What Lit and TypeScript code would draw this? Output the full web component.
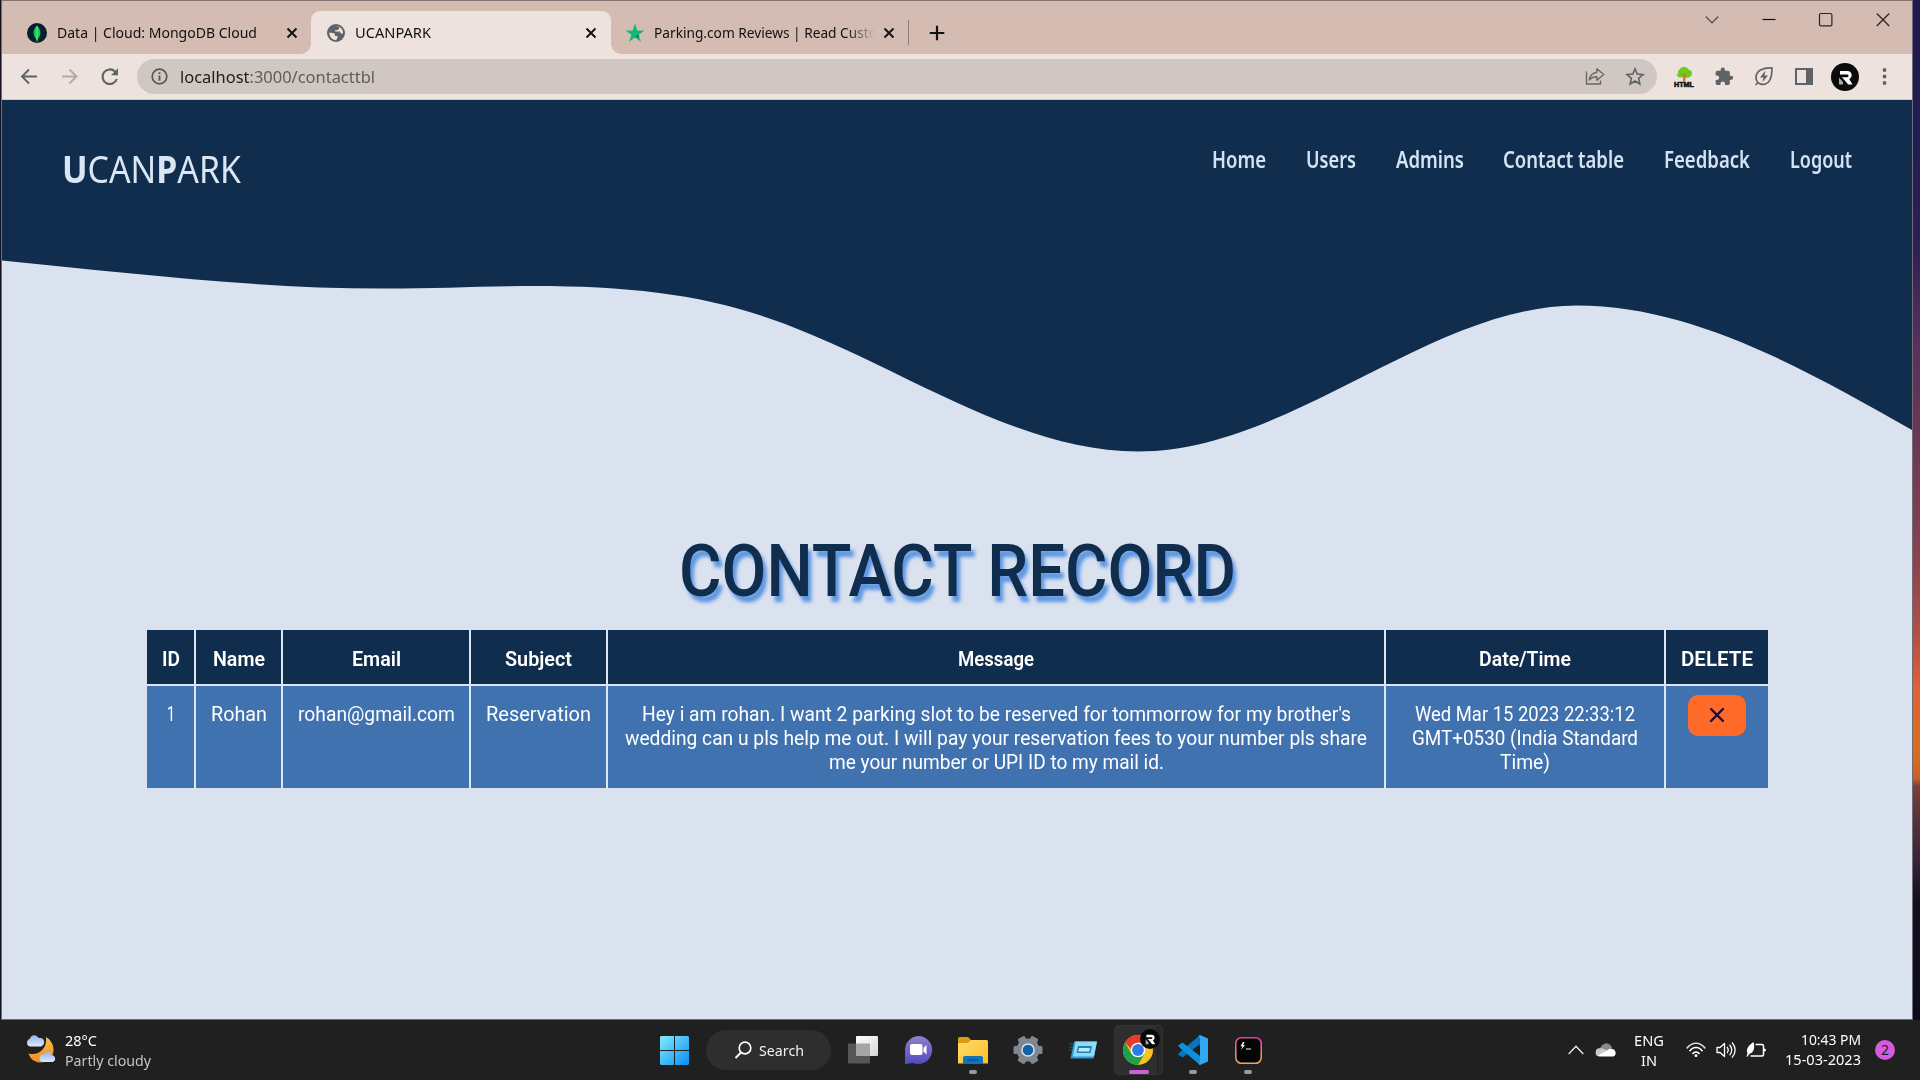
import { LitElement, html, css, svg } from "lit";
import { customElement, property } from "lit/decorators.js";

/** Text run condensed or stretched horizontally to an exact width. */
@customElement("fit-text")
class FitText extends LitElement {
  @property({ type: Number }) w = 100;
  static styles = css`
    :host { display: inline-block; white-space: nowrap; flex: none; }
    .run { display: inline-block; transform-origin: 0 50%; }
  `;
  firstUpdated() {
    const run = this.renderRoot.querySelector(".run") as HTMLElement;
    const natural = run.getBoundingClientRect().width;
    this.style.width = `${this.w}px`;
    run.style.transform = `scaleX(${this.w / natural})`;
  }
  render() { return html`<span class="run"><slot></slot></span>`; }
}

const R_MARK = svg`<path d="M9 8h7.500a4.200 4.200 0 0 1 1.700 8l3.300 5.500h-4.300l-6.200-7.300h5.200a1.300 1.300 0 0 0 0-2.700H9z" fill="#fff"/><path d="M8 14.500l4 4.500v2.500H8z" fill="#aaa"/>`;

const closeX = html`<svg class="x12" viewBox="0 0 12 12"><path d="M1.500 1.500l9 9M10.500 1.500l-9 9" stroke="#111" stroke-width="1.900"/></svg>`;

@customElement("browser-chrome")
class BrowserChrome extends LitElement {
  static styles = css`
    :host { display: block; font-family: "Noto Sans", "Open Sans", sans-serif; color: #111; }
    svg { display: block; flex: none; overflow: visible; }
    .strip { height: 54px; box-sizing: border-box; background: #d4bcb2; border-top: 1px solid #857370; padding: 10px 22px 0 0; display: flex; }
    .tab { display: flex; align-items: center; height: 43px; box-sizing: border-box; font-size: 14.500px; }
    .t1 { width: 309px; padding: 0 13px 0 25px; }
    .t2 { width: 300px; padding: 0 14px 0 16px; background: #ede2de; border-radius: 9px 9px 0 0; position: relative; }
    .t2::before, .t2::after { content: ""; position: absolute; bottom: 0; width: 10px; height: 10px; }
    .t2::before { left: -10px; background: radial-gradient(circle at 0 0, transparent 9.500px, #ede2de 10px); }
    .t2::after { right: -10px; background: radial-gradient(circle at 100% 0, transparent 9.500px, #ede2de 10px); }
    .t3 { width: 297px; padding: 0 13px 0 14px; }
    .lbl { margin-left: 10px; flex: 1; display: flex; padding-bottom: 2px; }
    .t3 .lbl { margin-left: 9px; }
    .fade { -webkit-mask-image: linear-gradient(90deg, #000 193px, transparent 221px); mask-image: linear-gradient(90deg, #000 193px, transparent 221px); }
    .x12 { width: 12px; height: 12px; }
    .sep { width: 1px; height: 25px; background: #8f7c76; align-self: center; }
    .plus { width: 16px; height: 16px; margin-left: 20px; align-self: center; }
    .win { margin-left: auto; display: flex; gap: 43px; padding-top: 2px; }
    .bar { height: 46px; box-sizing: border-box; background: #ede2de; border-bottom: 1px solid #cfc8c6; display: flex; align-items: center; padding-left: 17px; }
    .nav { display: flex; gap: 20.500px; }
    .addr { margin-left: 17px; width: 1520px; height: 35px; border-radius: 18px; background: #d0c7c2; display: flex; align-items: center; padding: 0 12px 0 13px; box-sizing: border-box; font-size: 17px; }
    .url { margin-left: 10px; flex: 1; color: #5f5c5b; padding-bottom: 1px; }
    .url b { font-weight: 400; color: #1b1b1b; }
    .acts { display: flex; gap: 20px; }
    .ext { margin-left: 17px; display: flex; align-items: center; gap: 20px; }
    .av { margin-left: 17px; }
    .dots { margin-left: 15px; }
  `;
  render() {
    return html`
      <div class="strip">
        <div class="tab t1">
          <svg width="20" height="20" viewBox="0 0 20 20"><circle cx="10" cy="10" r="10" fill="#06202d"/><path d="M10 2.500c5 5 4 10.500 0 14.500c-4-4-5-9.500 0-14.500z" fill="#10c956"/><path d="M10 3v15.500" stroke="#7df0a4" stroke-width=".9"/></svg>
          <div class="lbl"><fit-text w="200">Data | Cloud: MongoDB Cloud</fit-text></div>${closeX}
        </div>
        <div class="tab t2">
          <svg width="18" height="18" viewBox="0 0 18 18"><circle cx="9" cy="9" r="9" fill="#5f6368"/><path d="M2.300 8.500c2 .3 4.500.4 5.700 1.500v2h2.500v1.500c-1 1.500-.6 2-1.500 2.700A7 7 0 0 1 2.300 8.500zM9 1.900c1.500 0 2.600.4 3.200.8v1.800l-1.500 1.600H8.200v1.500h4.500l1.300 1.900h2a7 7 0 0 0-4-6.800z" fill="#ede2de"/></svg>
          <div class="lbl"><fit-text w="76">UCANPARK</fit-text></div>${closeX}
        </div>
        <div class="tab t3">
          <svg width="20" height="20" viewBox="0 0 20 20"><path d="M10 .5l2.300 7h7.200l-5.800 4.300 2.200 7L10 14.500l-5.900 4.300 2.200-7L.5 7.500h7.200z" fill="#14b67a"/><path d="M10 14.500l4.100-1.100-.4-1.600z" fill="#06593c"/></svg>
          <div class="lbl fade"><fit-text w="223">Parking.com Reviews | Read Custo</fit-text></div>${closeX}
        </div>
        <div class="sep"></div>
        <svg class="plus" viewBox="0 0 16 16"><path d="M8 .7v14.600M.7 8h14.600" stroke="#111" stroke-width="2.200"/></svg>
        <div class="win">
          <svg width="14" height="14" viewBox="0 0 14 14"><path d="M.8 3.500L7 10l6.200-6.500" fill="none" stroke="#5a4a45" stroke-width="1.200"/></svg>
          <svg width="14" height="14" viewBox="0 0 14 14"><path d="M.5 6.500h13" stroke="#111" stroke-width="1.200"/></svg>
          <svg width="14" height="14" viewBox="0 0 14 14"><rect x=".5" y=".5" width="12.400" height="12.400" rx="1.500" fill="none" stroke="#2a2120" stroke-width="1.200"/></svg>
          <svg width="14" height="14" viewBox="0 0 14 14"><path d="M.8.500L13.200 13M13.200.500L.8 13" stroke="#2a2120" stroke-width="1.200"/></svg>
        </div>
      </div>
      <div class="bar">
        <div class="nav">
          <svg width="20" height="20" viewBox="0 0 20 20"><path d="M18 9.500H3M10 2.500L3 9.500l7 7" fill="none" stroke="#5f6368" stroke-width="1.900"/></svg>
          <svg width="20" height="20" viewBox="0 0 20 20"><path d="M2 9.500h14M9.500 2.500l7 7-7 7" fill="none" stroke="#b3aba8" stroke-width="1.900"/></svg>
          <svg width="20" height="20" viewBox="0 0 20 20"><path d="M16.800 12A7.300 7.300 0 1 1 15 4.500" fill="none" stroke="#5f6368" stroke-width="2.100"/><path d="M18 1.200v7H11z" fill="#5f6368"/></svg>
        </div>
        <div class="addr">
          <svg width="20" height="20" viewBox="0 0 20 20"><circle cx="9.500" cy="9.500" r="7.300" fill="none" stroke="#54575b" stroke-width="1.700"/><path d="M9.500 8.500v5.200M9.500 5.200v1.900" stroke="#54575b" stroke-width="1.900"/></svg>
          <div class="url"><fit-text w="195"><b>localhost</b>:3000/contacttbl</fit-text></div>
          <div class="acts">
            <svg width="20" height="20" viewBox="0 0 20 20"><path d="M1.500 4.500v12.500h14V13.500" fill="none" stroke="#6a6665" stroke-width="1.400"/><path d="M11.800 1.800L18.800 7.500l-7 5.700v-3.500c-3.500 0-5.800 1-7.500 3.300.7-4.500 3.500-7 7.500-7.700z" fill="none" stroke="#6a6665" stroke-width="1.400" stroke-linejoin="round"/></svg>
            <svg width="20" height="20" viewBox="0 0 20 20"><path d="M10 1.800l2.200 5.300 5.800.5-4.400 3.800 1.300 5.600L10 14l-4.900 3 1.300-5.600L2 7.600l5.800-.5z" fill="none" stroke="#5f6368" stroke-width="1.600"/></svg>
          </div>
        </div>
        <div class="ext">
          <svg width="20" height="20" viewBox="0 0 20 20"><path d="M4.500 7a3.500 3.500 0 0 1 1-4.500A5 5 0 0 1 14.500 2.500a3.800 3.800 0 0 1 2.500 6.500c-2 2.500-5 2-7 .5-2 1.500-5 1.500-6.500-.5C2 7.500 3 6.500 4.500 7z" fill="#6dcb1d"/><path d="M9 14.500V9L6.500 6.500 9.500 8l.7-3.500L11 8l3-1.700L11.500 9v5.500z" fill="#c4812d"/><text x="0" y="19.500" font-family="Liberation Sans, sans-serif" font-size="6.500" font-weight="700" textLength="20" lengthAdjust="spacingAndGlyphs" fill="#111" stroke="#111" stroke-width=".5">HTML</text></svg>
          <svg width="20" height="20" viewBox="0 0 24 24"><path fill="#5f6368" d="M20.500 10.500H19V6.500c0-1.100-.9-2-2-2h-4V3a2.500 2.500 0 0 0-5 0v1.500H4c-1.100 0-2 .9-2 2v3.800h1.500c1.500 0 2.700 1.200 2.700 2.700S5 15.700 3.500 15.700H2V19.500c0 1.100.9 2 2 2h3.800V20c0-1.500 1.200-2.700 2.700-2.700s2.700 1.200 2.700 2.700v1.500H17c1.100 0 2-.9 2-2v-4h1.500a2.500 2.500 0 0 0 0-5z"/></svg>
          <svg width="20" height="20" viewBox="0 0 20 20"><path d="M18 1C9 .5 2 3.500 2 10.500A7 7 0 0 0 3.500 15C6 18 11 18.500 14.500 15 18.500 10.500 17.500 5.500 18 1zM1.500 18l3-3" fill="none" stroke="#5f6368" stroke-width="1.700"/><path d="M11.500 3.500L6 10.500h3.500L8.500 15 14 8.500h-3.600z" fill="#5f6368"/></svg>
          <svg width="20" height="20" viewBox="0 0 20 20"><path fill="#5f6368" fill-rule="evenodd" d="M1 1h18v17H1zM3 3v13h9V3z"/></svg>
        </div>
        <svg class="av" width="28" height="28" viewBox="0 0 28 28"><circle cx="14" cy="14" r="14" fill="#0b0b0b"/>${R_MARK}</svg>
        <svg class="dots" width="20" height="20" viewBox="0 0 20 20" fill="#5f6368"><circle cx="10.500" cy="3" r="1.900"/><circle cx="10.500" cy="9.500" r="1.900"/><circle cx="10.500" cy="16" r="1.900"/></svg>
      </div>`;
  }
}

const NAV: [string, number][] = [["Home", 54], ["Users", 50], ["Admins", 68], ["Contact table", 121], ["Feedback", 86], ["Logout", 62]];
const HEAD: [string, number][] = [["ID", 18], ["Name", 52], ["Email", 49], ["Subject", 67], ["Message", 76], ["Date/Time", 92], ["DELETE", 72]];
const ROW: [string, number][][] = [
  [["1", 8]],
  [["Rohan", 56]],
  [["rohan@gmail.com", 157]],
  [["Reservation", 105]],
  [
    ["Hey i am rohan. I want 2 parking slot to be reserved for tommorrow for my brother's", 709],
    ["wedding can u pls help me out. I will pay your reservation fees to your number pls share", 742],
    ["me your number or UPI ID to my mail id.", 335],
  ],
  [["Wed Mar 15 2023 22:33:12", 220], ["GMT+0530 (India Standard", 226], ["Time)", 50]],
];

@customElement("contact-page")
class ContactPage extends LitElement {
  static styles = css`
    :host { display: block; position: relative; width: 1910px; height: 919px; background: #dae1ef; font-family: Roboto, "Liberation Sans", sans-serif; }
    .wave { position: absolute; left: 0; top: 0; display: block; }
    header { position: relative; display: flex; justify-content: space-between; align-items: flex-start; padding: 45px 60px 0 60px; height: 432px; box-sizing: border-box; font-family: "Noto Sans", sans-serif; color: #dae6f3; }
    .logo { font-size: 38px; line-height: 46px; }
    .logo b { font-weight: 700; }
    nav { display: flex; gap: 39.800px; font-size: 22.500px; line-height: 30px; font-weight: 600; color: #d3e3f2; }
    h1 { margin: 0; height: 98px; text-align: center; font-size: 71.500px; line-height: 80px; font-weight: 500; color: #102d4d; text-shadow: 4px 6px 4px #5c97e3; }
    .table { margin-left: 145px; width: 1621px; display: grid; grid-template-columns: 47px 85px 186px 135px 776px 278px 102px; grid-template-rows: 54px 102px; gap: 2px; background: #dbe7f6; color: #fff; }
    .th { background: #102d4d; display: flex; align-items: center; justify-content: center; font-size: 21px; font-weight: 600; padding-top: 3px; box-sizing: border-box; }
    .td { background: #4072b0; display: flex; flex-direction: column; align-items: center; padding-top: 17px; font-size: 19.600px; line-height: 24px; box-sizing: border-box; }
    .act { padding-top: 9px; }
    button { width: 58px; height: 41px; border: 0; border-radius: 10px; background: #ff6a28; padding: 0 0 2px; display: grid; place-items: center; }
  `;
  render() {
    return html`
      <svg class="wave" width="1910" height="360" viewBox="2 100 1910 360"><path fill="#102d4d" d="M2 100V260.500C130 273 255 288.500 384 288.500C440 288.500 480 286 535 286C625 286 700 294 768 318C892 360 1012 451.500 1138 451.500C1290 451.500 1430 305.500 1577 305.500C1690 305.500 1800 366 1912 430V100z"/></svg>
      <header>
        <div class="logo"><fit-text w="179">  <b>U</b>CAN<b>P</b>ARK</fit-text></div>
        <nav>${NAV.map(([t, w]) => html`<fit-text w=${w}>${t}</fit-text>`)}</nav>
      </header>
      <h1><fit-text w="557">CONTACT RECORD</fit-text></h1>
      <div class="table">
        ${HEAD.map(([t, w]) => html`<div class="th"><fit-text w=${w}>${t}</fit-text></div>`)}
        ${ROW.map((c) => html`<div class="td">${c.map(([t, w]) => html`<fit-text w=${w}>${t}</fit-text>`)}</div>`)}
        <div class="td act"><button aria-label="Delete"><svg width="14" height="14" viewBox="0 0 14 14"><path d="M1 1l12 12M13 1L1 13" stroke="#1a0b38" stroke-width="2.400" stroke-linecap="round"/></svg></button></div>
      </div>`;
  }
}

@customElement("task-bar")
class TaskBar extends LitElement {
  static styles = css`
    :host { display: flex; width: 1920px; height: 60px; background: #202020; font-family: "Noto Sans", "Open Sans", sans-serif; color: #fff; font-size: 15px; line-height: 20px; align-items: center; box-sizing: border-box; }
    svg { display: block; flex: none; overflow: visible; }
    .weather { width: 660px; padding-left: 26px; box-sizing: border-box; display: flex; gap: 9px; align-items: center; }
    .weather svg { margin-top: -3px; }
    .two { display: flex; flex-direction: column; }
    .dim { color: #c4c4c4; }
    .apps { display: flex; align-items: center; height: 60px; width: 882px; }
    .search { margin-left: 17px; width: 125px; height: 40px; border-radius: 20px; background: #2e2e2e; display: flex; align-items: center; padding-left: 28px; gap: 7px; box-sizing: border-box; color: #f2f2f2; }
    .slot { height: 60px; width: 30px; display: grid; place-items: center; position: relative; flex: none; }
    .run::after { content: ""; position: absolute; left: 11px; top: 50px; width: 8px; height: 4px; border-radius: 2px; background: #9a9a9a; }
    .slots { display: flex; gap: 25px; margin-left: 17px; }
    .chrome::before { content: ""; position: absolute; left: -9px; top: 5px; width: 49px; height: 50px; border-radius: 5px; background: linear-gradient(90deg, #2e2e2e 43px, #202020 43px, #202020 44px, #292929 44px); box-shadow: inset 0 0 0 1px #343434; }
    .chrome::after { content: ""; position: absolute; left: 5.500px; top: 50px; width: 20px; height: 4px; border-radius: 2px; background: #cf5fdd; }
    .chrome svg { position: relative; }
    .tray { display: flex; align-items: center; margin-left: 26px; }
    .cloud { margin-left: 12px; }
    .lang { margin-left: 18px; align-items: center; width: 30px; }
    .sys { margin-left: 22px; display: flex; gap: 10px; }
    .clock { margin-left: 19px; align-items: flex-end; width: 76px; padding-bottom: 2px; }
    .count { margin-left: 14px; width: 20px; height: 20px; border-radius: 50%; background: #d65ae0; color: #222; text-align: center; font-size: 14px; }
  `;
  render() {
    return html`
      <div class="weather">
        <svg width="30" height="28" viewBox="0 0 30 28"><defs><linearGradient id="m" x2="0" y2="1"><stop stop-color="#f6c244"/><stop offset="1" stop-color="#f08a24"/></linearGradient><linearGradient id="c" x2="0" y2="1"><stop stop-color="#8fb2ee"/><stop offset="1" stop-color="#dfeafd"/></linearGradient></defs>
          <path d="M20 2c5 3 8 8 7.500 14-.5 7-7 12-14 11.500C8 27 4 23.500 2.500 18.500 8 20 13 18.500 16.500 14.500 20 11 20.500 6 20 2z" fill="url(#m)"/>
          <path d="M4 11.500a4 4 0 0 1 0-7.700A4.500 4.500 0 0 1 12.500 3a4.300 4.300 0 0 1 2.500 8.500z" fill="url(#c)"/>
          <path d="M17 27a3.700 3.700 0 0 1 .5-7.400 4.500 4.500 0 0 1 8.500.7 3.400 3.400 0 0 1 .5 6.700z" fill="url(#c)"/></svg>
        <div class="two"><fit-text w="32">28°C</fit-text><fit-text class="dim" w="86">Partly cloudy</fit-text></div>
      </div>
      <div class="apps">
        <svg width="29" height="29" viewBox="0 0 29 29"><defs><linearGradient id="s" gradientUnits="userSpaceOnUse" x1="0" y1="0" x2="29" y2="29"><stop stop-color="#7eeefc"/><stop offset="1" stop-color="#0a8df5"/></linearGradient></defs><path fill="url(#s)" d="M1 0h13v14H0V1zM15 0h13l1 1v13H15zM0 15h14v14H1l-1-1zM15 15h14v13l-1 1H15z"/></svg>
        <div class="search">
          <svg width="18" height="18" viewBox="0 0 18 18"><circle cx="11" cy="7" r="5.800" fill="none" stroke="#fff" stroke-width="1.700"/><path d="M7 11.500L1.500 17" stroke="#fff" stroke-width="1.900"/></svg>
          <fit-text w="45">Search</fit-text>
        </div>
        <div class="slots">
          <div class="slot"><svg width="30" height="28" viewBox="0 0 30 28"><defs><linearGradient id="a" x2="1" y2="1"><stop stop-color="#fff"/><stop offset="1" stop-color="#d5d5d5"/></linearGradient></defs><rect y="7.500" width="22" height="20" rx="1" fill="#565656"/><rect x="8" width="22" height="20" rx="1" fill="url(#a)"/><rect x="8" y="7.500" width="14" height="12.500" fill="#a5a5a5"/></svg></div>
          <div class="slot"><svg width="28" height="28" viewBox="0 0 28 28"><defs><linearGradient id="v" x2="0" y2="1"><stop stop-color="#8e82cb"/><stop offset="1" stop-color="#514bc0"/></linearGradient></defs><path d="M14 0a14 14 0 1 1-5 27l-8 1V14A14 14 0 0 1 14 0z" fill="url(#v)"/><rect x="6" y="8" width="12.500" height="11" rx="2" fill="#fff"/><path d="M19.500 12l3-3v9.500l-3-3z" fill="#fff"/></svg></div>
          <div class="slot run"><svg width="30" height="28" viewBox="0 0 30 28"><defs><linearGradient id="f" x2="1" y2="1"><stop stop-color="#ffdc6b"/><stop offset="1" stop-color="#fcbd27"/></linearGradient></defs><path d="M0 8V2.500Q0 1 1.500 1H10l3 3v5H0z" fill="#dc9b15"/><path d="M0 7h10l3-3h15.500Q30 4 30 5.500V27.500H0z" fill="url(#f)"/><path d="M5 28v-6q0-2 2-2h16q2 0 2 2v6z" fill="#1272bd"/><path d="M9 24h12" stroke="#0c4f91" stroke-width="1.300"/></svg></div>
          <div class="slot"><svg width="30" height="30" viewBox="0 0 30 30"><g fill="#7f8890"><circle cx="15" cy="15" r="11.500"/>${[0, 60, 120].map((a) => svg`<rect x="11" y="0.500" width="8" height="29" rx="1.500" transform="rotate(${a + 30} 15 15)"/>`)}</g><circle cx="15" cy="15" r="6.800" fill="#d7e4ee"/><circle cx="15" cy="15" r="5.300" fill="#1461a8"/></svg></div>
          <div class="slot"><svg width="28" height="20" viewBox="0 0 28 20"><path d="M5 1.500h23l-3.500 17H1.500z" fill="#2b9bd3"/><path d="M6.500 1.500H28l-3 15H4z" fill="#8bdcf8"/><path d="M9 6h14l-1.500 7h-14z" fill="#267fb0"/><path d="M10 8h11l-.8 3.500H9.300z" fill="#b9edfd"/><path d="M0 4h4M0 7h4M0 10h3" stroke="#155f85" stroke-width="1"/></svg></div>
          <div class="slot chrome"><svg width="30" height="30" viewBox="0 0 30 30"><circle cx="15" cy="15" r="15" fill="#fcc31e"/><path d="M15 15l6.500 3.800L15 30A15 15 0 0 1 2 7.500L8.500 19z" fill="#1fa04b"/><path d="M2 7.500A15 15 0 0 1 28 7.500H15L8 14z" fill="#e33b2e"/><circle cx="15" cy="15" r="7.300" fill="#fff"/><circle cx="15" cy="15" r="5.900" fill="#2c7be8"/><g transform="translate(17 -6) scale(.71)"><circle cx="14" cy="14" r="14" fill="#080808"/>${R_MARK}</g></svg></div>
          <div class="slot run"><svg width="30" height="30" viewBox="0 0 30 30"><path d="M22 0v9L4.500 22.500 0 19.500 2 17z" fill="#0874bd"/><path d="M22 30v-9L4.500 7.500 0 10.500 2 13z" fill="#0f8fdd"/><path d="M22 0l8 3.500v23L22 30l-1.500-1.200 1.500-2V3l-1.500-1.700z" fill="#32a8f0"/></svg></div>
          <div class="slot run"><svg width="27" height="27" viewBox="0 0 27 27"><defs><linearGradient id="t" x2="0" y2="1"><stop stop-color="#d8439b"/><stop offset="1" stop-color="#efa75c"/></linearGradient></defs><rect x=".8" y=".8" width="25.400" height="25.400" rx="5.500" fill="#050505" stroke="url(#t)" stroke-width="1.600"/><path d="M8 5L5.500 9.200h2L6 12.800 10 8.200H8L9.500 5z" fill="#fff"/><path d="M11 12h5" stroke="#ccc" stroke-width="1.200"/></svg></div>
        </div>
      </div>
      <div class="tray">
        <svg width="16" height="10" viewBox="0 0 16 10"><path d="M.7 9L8 1.200 15.300 9" fill="none" stroke="#eee" stroke-width="1.300"/></svg>
        <svg class="cloud" width="20" height="14" viewBox="0 0 20 14"><path d="M4 6C5 2 8 .5 10.500.5 14 .5 15.500 3 16 5l-5 4z" fill="#8a8a8a"/><path d="M4 13.500A4 4 0 0 1 3.500 5.300C7 4.500 10 7 13 9z" fill="#c9c9c9"/><path d="M2 12.500l9-5C13 5 18.500 5 19.500 9c.7 2.500-1 4.500-3 4.500H4.500z" fill="#fff"/></svg>
        <div class="two lang"><fit-text w="30">ENG</fit-text><fit-text w="16">IN</fit-text></div>
        <div class="sys">
          <svg width="20" height="16" viewBox="0 0 20 16" fill="none" stroke="#fff" stroke-width="1.500"><path d="M.7 6.500C6-.5 14-.5 19.300 6.500" opacity=".85"/><path d="M3.500 9.300c3.500-5 9.500-5 13 0M6.500 12c1.800-2.700 5.200-2.700 7 0"/><circle cx="10" cy="13.700" r="1.400" fill="#fff" stroke="none"/></svg>
          <svg width="20" height="16" viewBox="0 0 20 16" fill="none" stroke="#fff" stroke-width="1.300"><path d="M1 5.500h3L8.500 1.500v13L4 10.500H1z" stroke-linejoin="round"/><path d="M11 5c1.500 1.800 1.500 4.200 0 6M13.500 2.800c3 3 3 7.400 0 10.400M16 .5c4.200 4.500 4.200 10.500 0 15"/></svg>
          <svg width="20" height="16" viewBox="0 0 20 16"><path d="M9.500 2.500H16q1.500 0 1.500 1.500v8.500Q17.500 14 16 14H4.500" fill="none" stroke="#fff" stroke-width="1.500"/><path d="M18 6.500q2 0 2 1.500t-2 1.500z" fill="#fff"/><path d="M7.500 0c1.500 5 .5 10.500-3.500 11.500L1 15l-.5-.5 1-3C-.5 7 3 3 7.500 0z" fill="#fff"/></svg>
        </div>
        <div class="two clock"><fit-text w="60">10:43 PM</fit-text><fit-text w="76">15-03-2023</fit-text></div>
        <div class="count">2</div>
      </div>`;
  }
}

@customElement("app-root")
class AppRoot extends LitElement {
  static styles = css`
    :host { display: block; width: 1920px; height: 1080px; overflow: hidden; background: #202020; }
    .desk { display: flex; height: 1020px; box-sizing: border-box; background: linear-gradient(180deg, #1d1a4e 0, #201c55 110px, #2b1f55 240px, #56305c 340px, #6b3856 440px, #8a4350 560px, #b04f47 630px, #e0603a 690px, #d8701f 750px, #c9622a 778px, #7a4038 786px, #5a3436 815px, #38243a 860px, #12101f 900px, #0a0c1c 1020px); box-shadow: inset 1px 0 0 #15131f; padding-left: 1px; }
    .window { width: 1910px; border: solid #6d6d72; border-width: 0 1px 1px 1px; box-sizing: content-box; display: flex; flex-direction: column; overflow: hidden; }
  `;
  render() {
    return html`
      <div class="desk"><div class="window"><browser-chrome></browser-chrome><contact-page></contact-page></div></div>
      <task-bar></task-bar>`;
  }
}
